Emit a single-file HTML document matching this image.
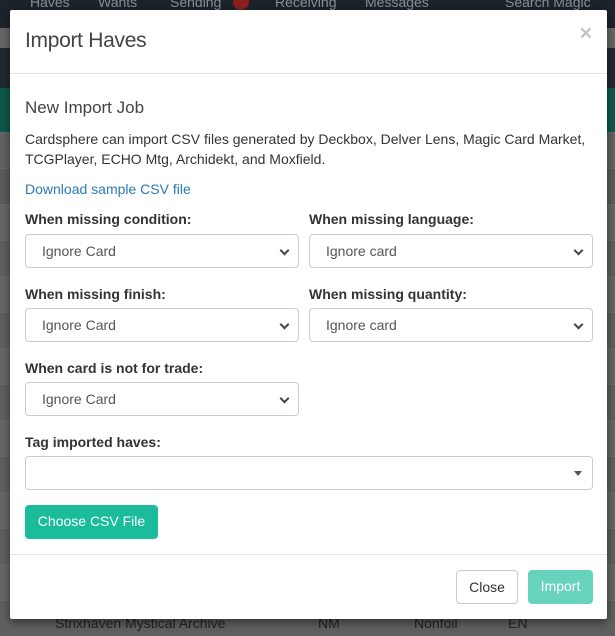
<!DOCTYPE html>
<html><head><style>
*{box-sizing:border-box;margin:0;padding:0}
body{width:615px;height:629px;overflow:hidden;background:#5f5f5f;font-family:"Liberation Sans",Arial,sans-serif;position:relative}
.nav{position:absolute;left:0;top:0;width:615px;height:28px;background:#1c232b;color:#8a8f94;font-size:14px}
.nav span{position:absolute;top:-6px}
.band1{position:absolute;left:0;top:28px;width:615px;height:20px;background:#666}
.band2{position:absolute;left:0;top:48px;width:615px;height:40px;background:#222a31}
.band3{position:absolute;left:0;top:88px;width:615px;height:44px;background:#0d5a48}
.row{position:absolute;left:0;width:615px;height:36px;border-top:1px solid #6a6a6a}
.modal{position:absolute;left:10px;top:10px;width:597px;height:609px;background:#fff;border-radius:2px;box-shadow:0 3px 9px rgba(0,0,0,.5);color:#333}
.hdr{height:64px;border-bottom:1px solid #e5e5e5;position:relative}
.hdr h1{position:absolute;left:15px;top:19px;font-size:21px;font-weight:normal;color:#444;letter-spacing:-0.3px}
.x{position:absolute;right:15px;top:12px;font-size:21px;font-weight:bold;color:#c4c4c4}
.abs{position:absolute}
h2{font-size:17px;font-weight:normal;color:#444}
.p{font-size:14px;line-height:20px}
.lbl{font-size:14px;font-weight:bold;color:#333}
.sel{position:absolute;height:34px;border:1px solid #ccc;border-radius:4px;font-size:14px;padding:8px 16px;color:#555;background:#fff}
.sel:after{content:"";position:absolute;right:10px;top:12px;width:5px;height:5px;border-right:2px solid #444;border-bottom:2px solid #444;transform:rotate(45deg)}
.btn{position:absolute;height:34px;border-radius:4px;font-size:14px;line-height:32px;text-align:center}
</style></head><body>
<div class="nav"><span style="left:30px">Haves</span><span style="left:98px">Wants</span><span style="left:170px">Sending</span><span style="left:233px;background:#8b1f1f;color:#ddd;border-radius:9px;width:16px;height:16px"></span><span style="left:275px">Receiving</span><span style="left:365px">Messages</span><span style="left:505px">Search Magic card</span></div>
<div class="band1"></div><div class="band2"></div><div class="band3"></div>
<div class="row" style="top:132px;background:#626262"></div>
<div class="row" style="top:168px;background:#5c5c5c"></div>
<div class="row" style="top:204px;background:#666"></div>
<div class="row" style="top:240px;background:#5f5f5f"></div>
<div class="row" style="top:276px;background:#666"></div>
<div class="row" style="top:312px;background:#5f5f5f"></div>
<div class="row" style="top:348px;background:#666"></div>
<div class="row" style="top:384px;background:#5f5f5f"></div>
<div class="row" style="top:420px;background:#666"></div>
<div class="row" style="top:456px;background:#5f5f5f"></div>
<div class="row" style="top:492px;background:#666"></div>
<div class="row" style="top:528px;background:#5f5f5f"></div>
<div class="row" style="top:564px;background:#666"></div>
<div class="row" style="top:600px;background:#5f5f5f;color:#222;font-size:14px"><span style="position:absolute;left:55px;top:14px">Strixhaven Mystical Archive</span><span style="position:absolute;left:318px;top:14px">NM</span><span style="position:absolute;left:414px;top:14px">Nonfoil</span><span style="position:absolute;left:508px;top:14px">EN</span></div>
<div class="modal">
<div class="hdr"><h1>Import Haves</h1><div class="x">×</div></div>
<h2 class="abs" style="left:15px;top:88px">New Import Job</h2>
<div class="abs p" style="left:15px;top:119px;width:570px">Cardsphere can import CSV files generated by Deckbox, Delver Lens, Magic Card Market, TCGPlayer, ECHO Mtg, Archidekt, and Moxfield.</div>
<div class="abs p" style="left:15px;top:169px;color:#2a7ab8">Download sample CSV file</div>
<div class="abs lbl" style="left:15px;top:201px">When missing condition:</div>
<div class="abs lbl" style="left:299px;top:201px">When missing language:</div>
<div class="sel" style="left:15px;top:224px;width:274px">Ignore Card</div>
<div class="sel" style="left:299px;top:224px;width:284px">Ignore card</div>
<div class="abs lbl" style="left:15px;top:276px">When missing finish:</div>
<div class="abs lbl" style="left:299px;top:276px">When missing quantity:</div>
<div class="sel" style="left:15px;top:298px;width:274px">Ignore Card</div>
<div class="sel" style="left:299px;top:298px;width:284px">Ignore card</div>
<div class="abs lbl" style="left:15px;top:350px">When card is not for trade:</div>
<div class="sel" style="left:15px;top:372px;width:274px">Ignore Card</div>
<div class="abs lbl" style="left:15px;top:424px">Tag imported haves:</div>
<div class="abs" style="left:15px;top:446px;width:568px;height:34px;border:1px solid #ccc;border-radius:4px"><div style="position:absolute;right:10px;top:14px;border-left:4px solid transparent;border-right:4px solid transparent;border-top:5px solid #555"></div></div>
<div class="btn" style="left:15px;top:495px;width:133px;background:#1abc9c;color:#fff">Choose CSV File</div>
<div class="abs" style="left:0;top:544px;width:597px;border-top:1px solid #e5e5e5"></div>
<div class="btn" style="left:446px;top:560px;width:62px;border:1px solid #ccc;color:#333;background:#fff">Close</div>
<div class="btn" style="left:518px;top:560px;width:65px;background:#68d3bd;color:#fff">Import</div>
</div>
</body></html>
